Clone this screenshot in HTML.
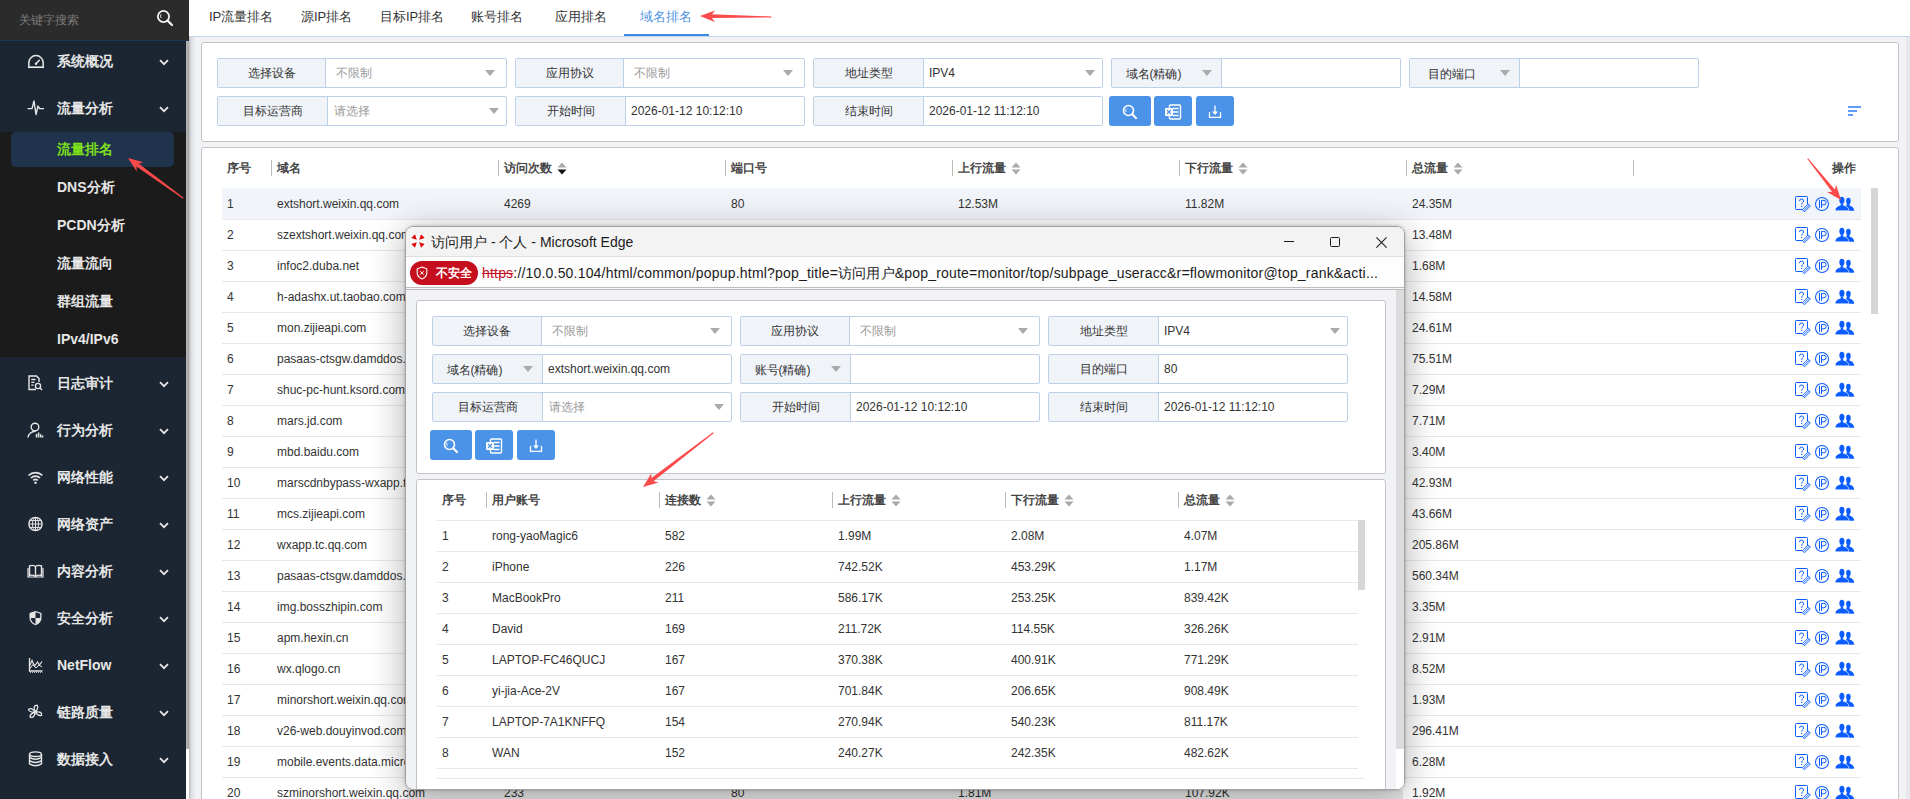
<!DOCTYPE html><html><head><meta charset="utf-8"><style>
*{box-sizing:border-box;margin:0;padding:0}
html,body{width:1910px;height:799px;overflow:hidden}
body{position:relative;background:#f0f2f5;font-family:"Liberation Sans", sans-serif;color:#333;font-size:12px}
.a{position:absolute;white-space:nowrap}
.side{position:absolute;left:0;top:0;width:186px;height:799px;background:#1c2633}
.mi{position:absolute;left:57px;font-size:14px;font-weight:bold;color:#e6e6e6;line-height:16px}
.si{position:absolute;left:57px;font-size:14px;font-weight:bold;color:#e6e6e6;line-height:16px}
.ic{position:absolute;left:27px}
.chev{position:absolute;left:159px}
.tab{position:absolute;top:9px;font-size:13px;color:#333;line-height:16px}
.card{position:absolute;background:#fff;border:1px solid #c4c4c4;border-radius:3px}
.fb{position:absolute;height:30px;border:1px solid #bcd0e8;border-radius:2px;background:#fff}
.fl{position:absolute;left:0;top:0;bottom:0;background:#f0f4f9;border-right:1px solid #bcd0e8;font-size:12px;color:#333;text-align:center;line-height:28px}
.fv{position:absolute;top:0;line-height:28px;font-size:12px;color:#333}
.ph{color:#999}
.tri{position:absolute;width:0;height:0;border-left:5.75px solid transparent;border-right:5.75px solid transparent;border-top:6px solid #aaa}
.btn{position:absolute;height:31px;background:#4b93e8;border-radius:3px}
.th{position:absolute;font-size:12px;font-weight:bold;color:#444;line-height:14px}
.dv{position:absolute;width:1px;height:16px;background:#bbb}
.td{position:absolute;font-size:12px;color:#333;line-height:14px}
.rl{position:absolute;height:1px;background:#e8e8e8}
.srt{position:absolute;width:10px;height:12px}
</style></head><body>

<div class="side">
<div class="a" style="left:0;top:0;width:189px;height:40px;background:#2b2b2b"></div>
<div class="a" style="left:0;top:40px;width:189px;height:1px;background:#1f3554"></div>
<div class="a" style="left:19px;top:12px;font-size:12px;color:#7a7a7a;line-height:16px">关键字搜索</div>
<svg class="a" style="left:156px;top:9px" width="18" height="18" viewBox="0 0 18 18"><circle cx="7.5" cy="7.5" r="5.6" fill="none" stroke="#f2f2f2" stroke-width="1.8"/><path d="M11.6 11.6 L16 16" stroke="#f2f2f2" stroke-width="2.2" stroke-linecap="round"/><path d="M5 5.5 A3 3 0 0 0 5.2 9" fill="none" stroke="#f2f2f2" stroke-width="1"/></svg>
<div class="a" style="left:0;top:132px;width:186px;height:225px;background:#1b1b1b"></div>
<div class="a" style="left:11px;top:132px;width:163px;height:35px;background:#20334d;border-radius:5px"></div>
</div>
<div class="a" style="left:186px;top:41px;width:3px;height:708px;background:linear-gradient(90deg,#b4b4b4,#a6a6a6)"></div>
<div class="a" style="left:186px;top:749px;width:3px;height:50px;background:#fff"></div>
<div class="a" style="left:189px;top:37px;width:7px;height:762px;background:linear-gradient(90deg,#b8b8b8,#dcdde0 30%,#f0f2f5)"></div>
<div class="ic" style="top:53px"><svg width="18" height="16" viewBox="0 0 18 16"><path d="M1.8 14 V9.8 A7.2 7.2 0 0 1 16.2 9.8 V14" fill="none" stroke="#e6e6e6" stroke-width="1.5"/><path d="M1 14.2 H17" stroke="#e6e6e6" stroke-width="1.7"/><path d="M9 10.8 L12.3 7.2" stroke="#e6e6e6" stroke-width="1.5" stroke-linecap="round"/><circle cx="9" cy="10.8" r="1.2" fill="#e6e6e6"/></svg></div>
<div class="mi" style="top:53px">系统概况</div>
<div class="chev" style="top:55px"><svg width="10" height="7" viewBox="0 0 10 7"><path d="M1 1.2 L5 5.2 L9 1.2" fill="none" stroke="#e6e6e6" stroke-width="1.8"/></svg></div>
<div class="ic" style="top:100px"><svg width="18" height="16" viewBox="0 0 18 16"><path d="M0.5 8.6 H5 L7 1 L9 14.5 L11 6 L12.6 8.6 H17" fill="none" stroke="#e6e6e6" stroke-width="1.4" stroke-linejoin="round"/></svg></div>
<div class="mi" style="top:100px">流量分析</div>
<div class="chev" style="top:102px"><svg width="10" height="7" viewBox="0 0 10 7"><path d="M1 1.2 L5 5.2 L9 1.2" fill="none" stroke="#e6e6e6" stroke-width="1.8"/></svg></div>
<div class="ic" style="top:375px"><svg width="18" height="16" viewBox="0 0 18 16"><path d="M9 14.5 H2 V1 H9.5 L12 3.6 V7" fill="none" stroke="#e6e6e6" stroke-width="1.4"/><path d="M4.3 4.5 H8.5 M4.3 7.3 H7.5 M4.3 10.2 H6.5" stroke="#e6e6e6" stroke-width="1.3"/><circle cx="11" cy="11" r="2.6" fill="none" stroke="#e6e6e6" stroke-width="1.4"/><path d="M13 13 L15 15" stroke="#e6e6e6" stroke-width="1.5"/></svg></div>
<div class="mi" style="top:375px">日志审计</div>
<div class="chev" style="top:377px"><svg width="10" height="7" viewBox="0 0 10 7"><path d="M1 1.2 L5 5.2 L9 1.2" fill="none" stroke="#e6e6e6" stroke-width="1.8"/></svg></div>
<div class="ic" style="top:422px"><svg width="18" height="16" viewBox="0 0 18 16"><circle cx="8" cy="5" r="3.8" fill="none" stroke="#e6e6e6" stroke-width="1.4"/><path d="M1 15.5 A7.5 7 0 0 1 8.5 9.3" fill="none" stroke="#e6e6e6" stroke-width="1.4"/><path d="M9.5 15.5 V12 M11.6 15.5 V10.5 M13.7 15.5 V12.3 M15.6 15.5 V13.5" stroke="#e6e6e6" stroke-width="1.5"/></svg></div>
<div class="mi" style="top:422px">行为分析</div>
<div class="chev" style="top:424px"><svg width="10" height="7" viewBox="0 0 10 7"><path d="M1 1.2 L5 5.2 L9 1.2" fill="none" stroke="#e6e6e6" stroke-width="1.8"/></svg></div>
<div class="ic" style="top:469px"><svg width="18" height="16" viewBox="0 0 18 16"><path d="M1.5 6.5 A10 10 0 0 1 15.5 6.5" fill="none" stroke="#e6e6e6" stroke-width="1.6"/><path d="M3.9 9 A6.6 6.6 0 0 1 13.1 9" fill="none" stroke="#e6e6e6" stroke-width="1.6"/><path d="M6.2 11.4 A3.3 3.3 0 0 1 10.8 11.4" fill="none" stroke="#e6e6e6" stroke-width="1.6"/><circle cx="8.5" cy="13.8" r="1.2" fill="#e6e6e6"/></svg></div>
<div class="mi" style="top:469px">网络性能</div>
<div class="chev" style="top:471px"><svg width="10" height="7" viewBox="0 0 10 7"><path d="M1 1.2 L5 5.2 L9 1.2" fill="none" stroke="#e6e6e6" stroke-width="1.8"/></svg></div>
<div class="ic" style="top:516px"><svg width="18" height="16" viewBox="0 0 18 16"><circle cx="8.5" cy="8" r="6.6" fill="none" stroke="#e6e6e6" stroke-width="1.4"/><ellipse cx="8.5" cy="8" rx="3" ry="6.6" fill="none" stroke="#e6e6e6" stroke-width="1"/><path d="M2 8 H15 M3 4.6 H14 M3 11.4 H14 M8.5 1.4 V14.6" stroke="#e6e6e6" stroke-width="1"/></svg></div>
<div class="mi" style="top:516px">网络资产</div>
<div class="chev" style="top:518px"><svg width="10" height="7" viewBox="0 0 10 7"><path d="M1 1.2 L5 5.2 L9 1.2" fill="none" stroke="#e6e6e6" stroke-width="1.8"/></svg></div>
<div class="ic" style="top:563px"><svg width="18" height="16" viewBox="0 0 18 16"><path d="M2.5 3 V12.5 Q5.5 11.5 8.5 13.5 Q11.5 11.5 14.5 12.5 V3 Q11.5 1.5 8.5 3.5 Q5.5 1.5 2.5 3 Z M8.5 3.5 V13.5" fill="none" stroke="#e6e6e6" stroke-width="1.4"/><path d="M1 5 V14 H16 V5" fill="none" stroke="#e6e6e6" stroke-width="1.2"/></svg></div>
<div class="mi" style="top:563px">内容分析</div>
<div class="chev" style="top:565px"><svg width="10" height="7" viewBox="0 0 10 7"><path d="M1 1.2 L5 5.2 L9 1.2" fill="none" stroke="#e6e6e6" stroke-width="1.8"/></svg></div>
<div class="ic" style="top:610px"><svg width="18" height="16" viewBox="0 0 18 16"><path d="M8.5 1 L14.5 3 V8 Q14.5 13 8.5 15.3 Q2.5 13 2.5 8 V3 Z" fill="#e6e6e6"/><path d="M8.5 2.3 V8 H13.2 V3.8 Z M8.5 8 V14 Q4 12 3.8 8 Z" fill="#1c2633"/></svg></div>
<div class="mi" style="top:610px">安全分析</div>
<div class="chev" style="top:612px"><svg width="10" height="7" viewBox="0 0 10 7"><path d="M1 1.2 L5 5.2 L9 1.2" fill="none" stroke="#e6e6e6" stroke-width="1.8"/></svg></div>
<div class="ic" style="top:657px"><svg width="18" height="16" viewBox="0 0 18 16"><path d="M2.5 1 V14 H15.5" fill="none" stroke="#e6e6e6" stroke-width="1.3"/><path d="M2.5 9 L5 3.5 L7.5 9 L10.5 5 L12.5 8 L15 4.5" fill="none" stroke="#e6e6e6" stroke-width="1.2"/><path d="M2.5 12 L6 7.5 L9 11 L12 8 L15 10" fill="none" stroke="#e6e6e6" stroke-width="1"/><path d="M3 15.5 H15.5" stroke="#e6e6e6" stroke-width="0.8" stroke-dasharray="1 1"/></svg></div>
<div class="mi" style="top:657px">NetFlow</div>
<div class="chev" style="top:659px"><svg width="10" height="7" viewBox="0 0 10 7"><path d="M1 1.2 L5 5.2 L9 1.2" fill="none" stroke="#e6e6e6" stroke-width="1.8"/></svg></div>
<div class="ic" style="top:704px"><svg width="18" height="16" viewBox="0 0 18 16"><g fill="none" stroke="#e6e6e6" stroke-width="1.3"><path d="M8.5 8 Q5 1.5 10 1.2 Q12 3.5 8.5 8Z"/><path d="M8.5 8 Q15.5 7 14.5 11.5 Q11 12.5 8.5 8Z"/><path d="M8.5 8 Q7 15 3 13 Q3 9.5 8.5 8Z"/><path d="M8.5 8 Q2 8.5 1.5 5.5 Q4.5 3 8.5 8Z"/></g></svg></div>
<div class="mi" style="top:704px">链路质量</div>
<div class="chev" style="top:706px"><svg width="10" height="7" viewBox="0 0 10 7"><path d="M1 1.2 L5 5.2 L9 1.2" fill="none" stroke="#e6e6e6" stroke-width="1.8"/></svg></div>
<div class="ic" style="top:751px"><svg width="18" height="16" viewBox="0 0 18 16"><g fill="none" stroke="#e6e6e6" stroke-width="1.4"><ellipse cx="8.5" cy="3.2" rx="6" ry="2.3"/><path d="M2.5 3.2 V12.8 Q8.5 16.6 14.5 12.8 V3.2"/><path d="M2.5 6.4 Q8.5 10.2 14.5 6.4 M2.5 9.6 Q8.5 13.4 14.5 9.6"/></g></svg></div>
<div class="mi" style="top:751px">数据接入</div>
<div class="chev" style="top:753px"><svg width="10" height="7" viewBox="0 0 10 7"><path d="M1 1.2 L5 5.2 L9 1.2" fill="none" stroke="#e6e6e6" stroke-width="1.8"/></svg></div>
<div class="si" style="top:141px;color:#7ddf1c">流量排名</div>
<div class="si" style="top:179px;color:#e6e6e6">DNS分析</div>
<div class="si" style="top:217px;color:#e6e6e6">PCDN分析</div>
<div class="si" style="top:255px;color:#e6e6e6">流量流向</div>
<div class="si" style="top:293px;color:#e6e6e6">群组流量</div>
<div class="si" style="top:331px;color:#e6e6e6">IPv4/IPv6</div>
<div class="a" style="left:189px;top:0;width:1721px;height:36px;background:#fff"></div>
<div class="a" style="left:189px;top:36px;width:1721px;height:1px;background:#c3d5ec"></div>
<div class="tab" style="left:209px;color:#333">IP流量排名</div>
<div class="tab" style="left:301px;color:#333">源IP排名</div>
<div class="tab" style="left:380px;color:#333">目标IP排名</div>
<div class="tab" style="left:471px;color:#333">账号排名</div>
<div class="tab" style="left:555px;color:#333">应用排名</div>
<div class="tab" style="left:640px;color:#4a90e2">域名排名</div>
<div class="a" style="left:624px;top:34px;width:85px;height:2px;background:#3d8ae6"></div>
<div class="card" style="left:201px;top:42px;width:1698px;height:100px"></div>
<div class="fb" style="left:217px;top:58px;width:290px"><div class="fl" style="width:108px">选择设备</div><div class="fv ph" style="left:118px">不限制</div><div class="tri" style="left:267px;top:11px"></div></div>
<div class="fb" style="left:515px;top:58px;width:290px"><div class="fl" style="width:108px">应用协议</div><div class="fv ph" style="left:118px">不限制</div><div class="tri" style="left:267px;top:11px"></div></div>
<div class="fb" style="left:813px;top:58px;width:290px"><div class="fl" style="width:110px">地址类型</div><div class="fv" style="left:115px">IPV4</div><div class="tri" style="left:271px;top:11px"></div></div>
<div class="fb" style="left:1111px;top:58px;width:290px"><div class="fl" style="width:110px;padding-right:26px;line-height:31px">域名(精确)</div><div class="tri" style="left:90px;top:11px"></div></div>
<div class="fb" style="left:1409px;top:58px;width:290px"><div class="fl" style="width:110px;padding-right:26px;line-height:31px">目的端口</div><div class="tri" style="left:90px;top:11px"></div></div>
<div class="fb" style="left:217px;top:96px;width:290px"><div class="fl" style="width:110px">目标运营商</div><div class="fv ph" style="left:116px">请选择</div><div class="tri" style="left:271px;top:11px"></div></div>
<div class="fb" style="left:515px;top:96px;width:290px"><div class="fl" style="width:110px">开始时间</div><div class="fv" style="left:115px">2026-01-12 10:12:10</div></div>
<div class="fb" style="left:813px;top:96px;width:290px"><div class="fl" style="width:110px">结束时间</div><div class="fv" style="left:115px">2026-01-12 11:12:10</div></div>
<div class="btn" style="left:1109px;top:96px;width:42px;height:30px;display:flex;align-items:center;justify-content:center;padding-top:2px"><svg width="16" height="16" viewBox="0 0 16 16"><circle cx="6.5" cy="6.5" r="5" fill="none" stroke="#fff" stroke-width="1.6"/><path d="M10.2 10.2 L14 14" stroke="#fff" stroke-width="2.2" stroke-linecap="round"/><path d="M4.2 4.5 A2.8 2.8 0 0 0 4.4 8" fill="none" stroke="#fff" stroke-width="0.9"/></svg></div>
<div class="btn" style="left:1154px;top:96px;width:38px;height:30px;display:flex;align-items:center;justify-content:center;padding-top:2px"><svg width="18" height="16" viewBox="0 0 18 16"><rect x="5.5" y="1" width="11" height="14" rx="1" fill="none" stroke="#fff" stroke-width="1.4"/><path d="M9 4.5 H14.5 M9 8 H14.5 M9 11.5 H14.5" stroke="#fff" stroke-width="1.4"/><rect x="1" y="4" width="8" height="8" rx="1" fill="#fff"/><path d="M3 6 L7 10 M7 6 L3 10" stroke="#4b93e8" stroke-width="1.1"/></svg></div>
<div class="btn" style="left:1196px;top:96px;width:38px;height:30px;display:flex;align-items:center;justify-content:center;padding-top:2px"><svg width="14" height="14" viewBox="0 0 14 14"><path d="M7 0.5 V8" fill="none" stroke="#fff" stroke-width="1.3"/><path d="M4 6.6 L7 10 L10 6.6 Z" fill="#fff"/><path d="M1.5 7 V12.3 H12.5 V7" fill="none" stroke="#fff" stroke-width="1.3"/></svg></div>
<svg class="a" style="left:1848px;top:106px" width="14" height="10" viewBox="0 0 14 10"><path d="M0 1 H13 M0 5 H9 M0 9 H5" stroke="#2f7cf6" stroke-width="1.6"/></svg>
<div class="card" style="left:201px;top:147px;width:1698px;height:700px"></div>
<div class="th" style="left:227px;top:161px">序号</div>
<div class="th" style="left:277px;top:161px">域名</div>
<div class="th" style="left:504px;top:161px">访问次数</div>
<svg class="a" style="left:557px;top:162px" width="10" height="13" viewBox="0 0 10 13"><path d="M0.5 5.5 L5 0.5 L9.5 5.5Z" fill="#aaa"/><path d="M0.5 7.5 L5 12.5 L9.5 7.5Z" fill="#111"/></svg>
<div class="th" style="left:731px;top:161px">端口号</div>
<div class="th" style="left:958px;top:161px">上行流量</div>
<svg class="a" style="left:1011px;top:162px" width="10" height="13" viewBox="0 0 10 13"><path d="M0.5 5.5 L5 0.5 L9.5 5.5Z" fill="#aaa"/><path d="M0.5 7.5 L5 12.5 L9.5 7.5Z" fill="#aaa"/></svg>
<div class="th" style="left:1185px;top:161px">下行流量</div>
<svg class="a" style="left:1238px;top:162px" width="10" height="13" viewBox="0 0 10 13"><path d="M0.5 5.5 L5 0.5 L9.5 5.5Z" fill="#aaa"/><path d="M0.5 7.5 L5 12.5 L9.5 7.5Z" fill="#aaa"/></svg>
<div class="th" style="left:1412px;top:161px">总流量</div>
<svg class="a" style="left:1453px;top:162px" width="10" height="13" viewBox="0 0 10 13"><path d="M0.5 5.5 L5 0.5 L9.5 5.5Z" fill="#aaa"/><path d="M0.5 7.5 L5 12.5 L9.5 7.5Z" fill="#aaa"/></svg>
<div class="dv" style="left:271px;top:160px"></div>
<div class="dv" style="left:498px;top:160px"></div>
<div class="dv" style="left:725px;top:160px"></div>
<div class="dv" style="left:952px;top:160px"></div>
<div class="dv" style="left:1179px;top:160px"></div>
<div class="dv" style="left:1406px;top:160px"></div>
<div class="dv" style="left:1633px;top:160px"></div>
<div class="th" style="left:1832px;top:161px">操作</div>
<div class="a" style="left:222px;top:188px;width:1639px;height:31px;background:#f1f4f8"></div>
<div class="td" style="left:227px;top:197px">1</div>
<div class="td" style="left:277px;top:197px">extshort.weixin.qq.com</div>
<div class="td" style="left:504px;top:197px">4269</div>
<div class="td" style="left:731px;top:197px">80</div>
<div class="td" style="left:958px;top:197px">12.53M</div>
<div class="td" style="left:1185px;top:197px">11.82M</div>
<div class="td" style="left:1412px;top:197px">24.35M</div>
<div class="a" style="left:1793px;top:195px;line-height:0"><svg width="64" height="18" viewBox="0 0 64 18"><g fill="none" stroke="#0b5cff" stroke-width="1.1">
<path d="M9.6 14.5 H3.3 Q2.5 14.5 2.5 13.7 V2.3 Q2.5 1.5 3.3 1.5 H13.7 Q14.5 1.5 14.5 2.3 V9.4" stroke-width="1"/>
<path d="M6.5 6.1 Q6.5 4.0 8.5 4.0 Q10.6 4.0 10.6 5.9 Q10.6 7.2 9.3 8.0 Q8.7 8.5 8.7 9.7" stroke-width="1"/>
<path d="M8.7 11.0 V12.0" stroke-width="1.1"/>
<path d="M9.4 14.7 L15.2 8.9 L17.3 11.0 L11.5 16.8 Z M10.5 15.8 L16.2 10.1" stroke-width="0.9"/>
<circle cx="29" cy="9" r="6.5" stroke-width="1.05"/>
<path d="M26.5 4.9 V12.9 M28.5 12.9 V5.4 H30.9 A2.2 2.2 0 0 1 30.9 9.8 H28.5" stroke-width="1"/>
</g><g fill="#0b5cff">
<ellipse cx="55.4" cy="5.9" rx="2.3" ry="3.2"/>
<path d="M54.2 8.5 H56.6 V10.8 Q60.9 11.6 61.2 15.8 H55 Q55 12.5 53 11 Z"/>
<path d="M47.4 8 H50.4 V10.3 Q55.6 11.3 56 15.8 H42 Q42.3 11.3 47.4 10.3 Z" stroke="#fff" stroke-width="0.6"/>
<ellipse cx="48.9" cy="5.2" rx="2.55" ry="3.5"/>
</g></svg></div>
<div class="rl" style="left:222px;top:219px;width:1639px"></div>
<div class="td" style="left:227px;top:228px">2</div>
<div class="td" style="left:277px;top:228px">szextshort.weixin.qq.com</div>
<div class="td" style="left:1412px;top:228px">13.48M</div>
<div class="a" style="left:1793px;top:226px;line-height:0"><svg width="64" height="18" viewBox="0 0 64 18"><g fill="none" stroke="#0b5cff" stroke-width="1.1">
<path d="M9.6 14.5 H3.3 Q2.5 14.5 2.5 13.7 V2.3 Q2.5 1.5 3.3 1.5 H13.7 Q14.5 1.5 14.5 2.3 V9.4" stroke-width="1"/>
<path d="M6.5 6.1 Q6.5 4.0 8.5 4.0 Q10.6 4.0 10.6 5.9 Q10.6 7.2 9.3 8.0 Q8.7 8.5 8.7 9.7" stroke-width="1"/>
<path d="M8.7 11.0 V12.0" stroke-width="1.1"/>
<path d="M9.4 14.7 L15.2 8.9 L17.3 11.0 L11.5 16.8 Z M10.5 15.8 L16.2 10.1" stroke-width="0.9"/>
<circle cx="29" cy="9" r="6.5" stroke-width="1.05"/>
<path d="M26.5 4.9 V12.9 M28.5 12.9 V5.4 H30.9 A2.2 2.2 0 0 1 30.9 9.8 H28.5" stroke-width="1"/>
</g><g fill="#0b5cff">
<ellipse cx="55.4" cy="5.9" rx="2.3" ry="3.2"/>
<path d="M54.2 8.5 H56.6 V10.8 Q60.9 11.6 61.2 15.8 H55 Q55 12.5 53 11 Z"/>
<path d="M47.4 8 H50.4 V10.3 Q55.6 11.3 56 15.8 H42 Q42.3 11.3 47.4 10.3 Z" stroke="#fff" stroke-width="0.6"/>
<ellipse cx="48.9" cy="5.2" rx="2.55" ry="3.5"/>
</g></svg></div>
<div class="rl" style="left:222px;top:250px;width:1639px"></div>
<div class="td" style="left:227px;top:259px">3</div>
<div class="td" style="left:277px;top:259px">infoc2.duba.net</div>
<div class="td" style="left:1412px;top:259px">1.68M</div>
<div class="a" style="left:1793px;top:257px;line-height:0"><svg width="64" height="18" viewBox="0 0 64 18"><g fill="none" stroke="#0b5cff" stroke-width="1.1">
<path d="M9.6 14.5 H3.3 Q2.5 14.5 2.5 13.7 V2.3 Q2.5 1.5 3.3 1.5 H13.7 Q14.5 1.5 14.5 2.3 V9.4" stroke-width="1"/>
<path d="M6.5 6.1 Q6.5 4.0 8.5 4.0 Q10.6 4.0 10.6 5.9 Q10.6 7.2 9.3 8.0 Q8.7 8.5 8.7 9.7" stroke-width="1"/>
<path d="M8.7 11.0 V12.0" stroke-width="1.1"/>
<path d="M9.4 14.7 L15.2 8.9 L17.3 11.0 L11.5 16.8 Z M10.5 15.8 L16.2 10.1" stroke-width="0.9"/>
<circle cx="29" cy="9" r="6.5" stroke-width="1.05"/>
<path d="M26.5 4.9 V12.9 M28.5 12.9 V5.4 H30.9 A2.2 2.2 0 0 1 30.9 9.8 H28.5" stroke-width="1"/>
</g><g fill="#0b5cff">
<ellipse cx="55.4" cy="5.9" rx="2.3" ry="3.2"/>
<path d="M54.2 8.5 H56.6 V10.8 Q60.9 11.6 61.2 15.8 H55 Q55 12.5 53 11 Z"/>
<path d="M47.4 8 H50.4 V10.3 Q55.6 11.3 56 15.8 H42 Q42.3 11.3 47.4 10.3 Z" stroke="#fff" stroke-width="0.6"/>
<ellipse cx="48.9" cy="5.2" rx="2.55" ry="3.5"/>
</g></svg></div>
<div class="rl" style="left:222px;top:281px;width:1639px"></div>
<div class="td" style="left:227px;top:290px">4</div>
<div class="td" style="left:277px;top:290px">h-adashx.ut.taobao.com</div>
<div class="td" style="left:1412px;top:290px">14.58M</div>
<div class="a" style="left:1793px;top:288px;line-height:0"><svg width="64" height="18" viewBox="0 0 64 18"><g fill="none" stroke="#0b5cff" stroke-width="1.1">
<path d="M9.6 14.5 H3.3 Q2.5 14.5 2.5 13.7 V2.3 Q2.5 1.5 3.3 1.5 H13.7 Q14.5 1.5 14.5 2.3 V9.4" stroke-width="1"/>
<path d="M6.5 6.1 Q6.5 4.0 8.5 4.0 Q10.6 4.0 10.6 5.9 Q10.6 7.2 9.3 8.0 Q8.7 8.5 8.7 9.7" stroke-width="1"/>
<path d="M8.7 11.0 V12.0" stroke-width="1.1"/>
<path d="M9.4 14.7 L15.2 8.9 L17.3 11.0 L11.5 16.8 Z M10.5 15.8 L16.2 10.1" stroke-width="0.9"/>
<circle cx="29" cy="9" r="6.5" stroke-width="1.05"/>
<path d="M26.5 4.9 V12.9 M28.5 12.9 V5.4 H30.9 A2.2 2.2 0 0 1 30.9 9.8 H28.5" stroke-width="1"/>
</g><g fill="#0b5cff">
<ellipse cx="55.4" cy="5.9" rx="2.3" ry="3.2"/>
<path d="M54.2 8.5 H56.6 V10.8 Q60.9 11.6 61.2 15.8 H55 Q55 12.5 53 11 Z"/>
<path d="M47.4 8 H50.4 V10.3 Q55.6 11.3 56 15.8 H42 Q42.3 11.3 47.4 10.3 Z" stroke="#fff" stroke-width="0.6"/>
<ellipse cx="48.9" cy="5.2" rx="2.55" ry="3.5"/>
</g></svg></div>
<div class="rl" style="left:222px;top:312px;width:1639px"></div>
<div class="td" style="left:227px;top:321px">5</div>
<div class="td" style="left:277px;top:321px">mon.zijieapi.com</div>
<div class="td" style="left:1412px;top:321px">24.61M</div>
<div class="a" style="left:1793px;top:319px;line-height:0"><svg width="64" height="18" viewBox="0 0 64 18"><g fill="none" stroke="#0b5cff" stroke-width="1.1">
<path d="M9.6 14.5 H3.3 Q2.5 14.5 2.5 13.7 V2.3 Q2.5 1.5 3.3 1.5 H13.7 Q14.5 1.5 14.5 2.3 V9.4" stroke-width="1"/>
<path d="M6.5 6.1 Q6.5 4.0 8.5 4.0 Q10.6 4.0 10.6 5.9 Q10.6 7.2 9.3 8.0 Q8.7 8.5 8.7 9.7" stroke-width="1"/>
<path d="M8.7 11.0 V12.0" stroke-width="1.1"/>
<path d="M9.4 14.7 L15.2 8.9 L17.3 11.0 L11.5 16.8 Z M10.5 15.8 L16.2 10.1" stroke-width="0.9"/>
<circle cx="29" cy="9" r="6.5" stroke-width="1.05"/>
<path d="M26.5 4.9 V12.9 M28.5 12.9 V5.4 H30.9 A2.2 2.2 0 0 1 30.9 9.8 H28.5" stroke-width="1"/>
</g><g fill="#0b5cff">
<ellipse cx="55.4" cy="5.9" rx="2.3" ry="3.2"/>
<path d="M54.2 8.5 H56.6 V10.8 Q60.9 11.6 61.2 15.8 H55 Q55 12.5 53 11 Z"/>
<path d="M47.4 8 H50.4 V10.3 Q55.6 11.3 56 15.8 H42 Q42.3 11.3 47.4 10.3 Z" stroke="#fff" stroke-width="0.6"/>
<ellipse cx="48.9" cy="5.2" rx="2.55" ry="3.5"/>
</g></svg></div>
<div class="rl" style="left:222px;top:343px;width:1639px"></div>
<div class="td" style="left:227px;top:352px">6</div>
<div class="td" style="left:277px;top:352px">pasaas-ctsgw.damddos.com</div>
<div class="td" style="left:1412px;top:352px">75.51M</div>
<div class="a" style="left:1793px;top:350px;line-height:0"><svg width="64" height="18" viewBox="0 0 64 18"><g fill="none" stroke="#0b5cff" stroke-width="1.1">
<path d="M9.6 14.5 H3.3 Q2.5 14.5 2.5 13.7 V2.3 Q2.5 1.5 3.3 1.5 H13.7 Q14.5 1.5 14.5 2.3 V9.4" stroke-width="1"/>
<path d="M6.5 6.1 Q6.5 4.0 8.5 4.0 Q10.6 4.0 10.6 5.9 Q10.6 7.2 9.3 8.0 Q8.7 8.5 8.7 9.7" stroke-width="1"/>
<path d="M8.7 11.0 V12.0" stroke-width="1.1"/>
<path d="M9.4 14.7 L15.2 8.9 L17.3 11.0 L11.5 16.8 Z M10.5 15.8 L16.2 10.1" stroke-width="0.9"/>
<circle cx="29" cy="9" r="6.5" stroke-width="1.05"/>
<path d="M26.5 4.9 V12.9 M28.5 12.9 V5.4 H30.9 A2.2 2.2 0 0 1 30.9 9.8 H28.5" stroke-width="1"/>
</g><g fill="#0b5cff">
<ellipse cx="55.4" cy="5.9" rx="2.3" ry="3.2"/>
<path d="M54.2 8.5 H56.6 V10.8 Q60.9 11.6 61.2 15.8 H55 Q55 12.5 53 11 Z"/>
<path d="M47.4 8 H50.4 V10.3 Q55.6 11.3 56 15.8 H42 Q42.3 11.3 47.4 10.3 Z" stroke="#fff" stroke-width="0.6"/>
<ellipse cx="48.9" cy="5.2" rx="2.55" ry="3.5"/>
</g></svg></div>
<div class="rl" style="left:222px;top:374px;width:1639px"></div>
<div class="td" style="left:227px;top:383px">7</div>
<div class="td" style="left:277px;top:383px">shuc-pc-hunt.ksord.com</div>
<div class="td" style="left:1412px;top:383px">7.29M</div>
<div class="a" style="left:1793px;top:381px;line-height:0"><svg width="64" height="18" viewBox="0 0 64 18"><g fill="none" stroke="#0b5cff" stroke-width="1.1">
<path d="M9.6 14.5 H3.3 Q2.5 14.5 2.5 13.7 V2.3 Q2.5 1.5 3.3 1.5 H13.7 Q14.5 1.5 14.5 2.3 V9.4" stroke-width="1"/>
<path d="M6.5 6.1 Q6.5 4.0 8.5 4.0 Q10.6 4.0 10.6 5.9 Q10.6 7.2 9.3 8.0 Q8.7 8.5 8.7 9.7" stroke-width="1"/>
<path d="M8.7 11.0 V12.0" stroke-width="1.1"/>
<path d="M9.4 14.7 L15.2 8.9 L17.3 11.0 L11.5 16.8 Z M10.5 15.8 L16.2 10.1" stroke-width="0.9"/>
<circle cx="29" cy="9" r="6.5" stroke-width="1.05"/>
<path d="M26.5 4.9 V12.9 M28.5 12.9 V5.4 H30.9 A2.2 2.2 0 0 1 30.9 9.8 H28.5" stroke-width="1"/>
</g><g fill="#0b5cff">
<ellipse cx="55.4" cy="5.9" rx="2.3" ry="3.2"/>
<path d="M54.2 8.5 H56.6 V10.8 Q60.9 11.6 61.2 15.8 H55 Q55 12.5 53 11 Z"/>
<path d="M47.4 8 H50.4 V10.3 Q55.6 11.3 56 15.8 H42 Q42.3 11.3 47.4 10.3 Z" stroke="#fff" stroke-width="0.6"/>
<ellipse cx="48.9" cy="5.2" rx="2.55" ry="3.5"/>
</g></svg></div>
<div class="rl" style="left:222px;top:405px;width:1639px"></div>
<div class="td" style="left:227px;top:414px">8</div>
<div class="td" style="left:277px;top:414px">mars.jd.com</div>
<div class="td" style="left:1412px;top:414px">7.71M</div>
<div class="a" style="left:1793px;top:412px;line-height:0"><svg width="64" height="18" viewBox="0 0 64 18"><g fill="none" stroke="#0b5cff" stroke-width="1.1">
<path d="M9.6 14.5 H3.3 Q2.5 14.5 2.5 13.7 V2.3 Q2.5 1.5 3.3 1.5 H13.7 Q14.5 1.5 14.5 2.3 V9.4" stroke-width="1"/>
<path d="M6.5 6.1 Q6.5 4.0 8.5 4.0 Q10.6 4.0 10.6 5.9 Q10.6 7.2 9.3 8.0 Q8.7 8.5 8.7 9.7" stroke-width="1"/>
<path d="M8.7 11.0 V12.0" stroke-width="1.1"/>
<path d="M9.4 14.7 L15.2 8.9 L17.3 11.0 L11.5 16.8 Z M10.5 15.8 L16.2 10.1" stroke-width="0.9"/>
<circle cx="29" cy="9" r="6.5" stroke-width="1.05"/>
<path d="M26.5 4.9 V12.9 M28.5 12.9 V5.4 H30.9 A2.2 2.2 0 0 1 30.9 9.8 H28.5" stroke-width="1"/>
</g><g fill="#0b5cff">
<ellipse cx="55.4" cy="5.9" rx="2.3" ry="3.2"/>
<path d="M54.2 8.5 H56.6 V10.8 Q60.9 11.6 61.2 15.8 H55 Q55 12.5 53 11 Z"/>
<path d="M47.4 8 H50.4 V10.3 Q55.6 11.3 56 15.8 H42 Q42.3 11.3 47.4 10.3 Z" stroke="#fff" stroke-width="0.6"/>
<ellipse cx="48.9" cy="5.2" rx="2.55" ry="3.5"/>
</g></svg></div>
<div class="rl" style="left:222px;top:436px;width:1639px"></div>
<div class="td" style="left:227px;top:445px">9</div>
<div class="td" style="left:277px;top:445px">mbd.baidu.com</div>
<div class="td" style="left:1412px;top:445px">3.40M</div>
<div class="a" style="left:1793px;top:443px;line-height:0"><svg width="64" height="18" viewBox="0 0 64 18"><g fill="none" stroke="#0b5cff" stroke-width="1.1">
<path d="M9.6 14.5 H3.3 Q2.5 14.5 2.5 13.7 V2.3 Q2.5 1.5 3.3 1.5 H13.7 Q14.5 1.5 14.5 2.3 V9.4" stroke-width="1"/>
<path d="M6.5 6.1 Q6.5 4.0 8.5 4.0 Q10.6 4.0 10.6 5.9 Q10.6 7.2 9.3 8.0 Q8.7 8.5 8.7 9.7" stroke-width="1"/>
<path d="M8.7 11.0 V12.0" stroke-width="1.1"/>
<path d="M9.4 14.7 L15.2 8.9 L17.3 11.0 L11.5 16.8 Z M10.5 15.8 L16.2 10.1" stroke-width="0.9"/>
<circle cx="29" cy="9" r="6.5" stroke-width="1.05"/>
<path d="M26.5 4.9 V12.9 M28.5 12.9 V5.4 H30.9 A2.2 2.2 0 0 1 30.9 9.8 H28.5" stroke-width="1"/>
</g><g fill="#0b5cff">
<ellipse cx="55.4" cy="5.9" rx="2.3" ry="3.2"/>
<path d="M54.2 8.5 H56.6 V10.8 Q60.9 11.6 61.2 15.8 H55 Q55 12.5 53 11 Z"/>
<path d="M47.4 8 H50.4 V10.3 Q55.6 11.3 56 15.8 H42 Q42.3 11.3 47.4 10.3 Z" stroke="#fff" stroke-width="0.6"/>
<ellipse cx="48.9" cy="5.2" rx="2.55" ry="3.5"/>
</g></svg></div>
<div class="rl" style="left:222px;top:467px;width:1639px"></div>
<div class="td" style="left:227px;top:476px">10</div>
<div class="td" style="left:277px;top:476px">marscdnbypass-wxapp.tc.qq.com</div>
<div class="td" style="left:1412px;top:476px">42.93M</div>
<div class="a" style="left:1793px;top:474px;line-height:0"><svg width="64" height="18" viewBox="0 0 64 18"><g fill="none" stroke="#0b5cff" stroke-width="1.1">
<path d="M9.6 14.5 H3.3 Q2.5 14.5 2.5 13.7 V2.3 Q2.5 1.5 3.3 1.5 H13.7 Q14.5 1.5 14.5 2.3 V9.4" stroke-width="1"/>
<path d="M6.5 6.1 Q6.5 4.0 8.5 4.0 Q10.6 4.0 10.6 5.9 Q10.6 7.2 9.3 8.0 Q8.7 8.5 8.7 9.7" stroke-width="1"/>
<path d="M8.7 11.0 V12.0" stroke-width="1.1"/>
<path d="M9.4 14.7 L15.2 8.9 L17.3 11.0 L11.5 16.8 Z M10.5 15.8 L16.2 10.1" stroke-width="0.9"/>
<circle cx="29" cy="9" r="6.5" stroke-width="1.05"/>
<path d="M26.5 4.9 V12.9 M28.5 12.9 V5.4 H30.9 A2.2 2.2 0 0 1 30.9 9.8 H28.5" stroke-width="1"/>
</g><g fill="#0b5cff">
<ellipse cx="55.4" cy="5.9" rx="2.3" ry="3.2"/>
<path d="M54.2 8.5 H56.6 V10.8 Q60.9 11.6 61.2 15.8 H55 Q55 12.5 53 11 Z"/>
<path d="M47.4 8 H50.4 V10.3 Q55.6 11.3 56 15.8 H42 Q42.3 11.3 47.4 10.3 Z" stroke="#fff" stroke-width="0.6"/>
<ellipse cx="48.9" cy="5.2" rx="2.55" ry="3.5"/>
</g></svg></div>
<div class="rl" style="left:222px;top:498px;width:1639px"></div>
<div class="td" style="left:227px;top:507px">11</div>
<div class="td" style="left:277px;top:507px">mcs.zijieapi.com</div>
<div class="td" style="left:1412px;top:507px">43.66M</div>
<div class="a" style="left:1793px;top:505px;line-height:0"><svg width="64" height="18" viewBox="0 0 64 18"><g fill="none" stroke="#0b5cff" stroke-width="1.1">
<path d="M9.6 14.5 H3.3 Q2.5 14.5 2.5 13.7 V2.3 Q2.5 1.5 3.3 1.5 H13.7 Q14.5 1.5 14.5 2.3 V9.4" stroke-width="1"/>
<path d="M6.5 6.1 Q6.5 4.0 8.5 4.0 Q10.6 4.0 10.6 5.9 Q10.6 7.2 9.3 8.0 Q8.7 8.5 8.7 9.7" stroke-width="1"/>
<path d="M8.7 11.0 V12.0" stroke-width="1.1"/>
<path d="M9.4 14.7 L15.2 8.9 L17.3 11.0 L11.5 16.8 Z M10.5 15.8 L16.2 10.1" stroke-width="0.9"/>
<circle cx="29" cy="9" r="6.5" stroke-width="1.05"/>
<path d="M26.5 4.9 V12.9 M28.5 12.9 V5.4 H30.9 A2.2 2.2 0 0 1 30.9 9.8 H28.5" stroke-width="1"/>
</g><g fill="#0b5cff">
<ellipse cx="55.4" cy="5.9" rx="2.3" ry="3.2"/>
<path d="M54.2 8.5 H56.6 V10.8 Q60.9 11.6 61.2 15.8 H55 Q55 12.5 53 11 Z"/>
<path d="M47.4 8 H50.4 V10.3 Q55.6 11.3 56 15.8 H42 Q42.3 11.3 47.4 10.3 Z" stroke="#fff" stroke-width="0.6"/>
<ellipse cx="48.9" cy="5.2" rx="2.55" ry="3.5"/>
</g></svg></div>
<div class="rl" style="left:222px;top:529px;width:1639px"></div>
<div class="td" style="left:227px;top:538px">12</div>
<div class="td" style="left:277px;top:538px">wxapp.tc.qq.com</div>
<div class="td" style="left:1412px;top:538px">205.86M</div>
<div class="a" style="left:1793px;top:536px;line-height:0"><svg width="64" height="18" viewBox="0 0 64 18"><g fill="none" stroke="#0b5cff" stroke-width="1.1">
<path d="M9.6 14.5 H3.3 Q2.5 14.5 2.5 13.7 V2.3 Q2.5 1.5 3.3 1.5 H13.7 Q14.5 1.5 14.5 2.3 V9.4" stroke-width="1"/>
<path d="M6.5 6.1 Q6.5 4.0 8.5 4.0 Q10.6 4.0 10.6 5.9 Q10.6 7.2 9.3 8.0 Q8.7 8.5 8.7 9.7" stroke-width="1"/>
<path d="M8.7 11.0 V12.0" stroke-width="1.1"/>
<path d="M9.4 14.7 L15.2 8.9 L17.3 11.0 L11.5 16.8 Z M10.5 15.8 L16.2 10.1" stroke-width="0.9"/>
<circle cx="29" cy="9" r="6.5" stroke-width="1.05"/>
<path d="M26.5 4.9 V12.9 M28.5 12.9 V5.4 H30.9 A2.2 2.2 0 0 1 30.9 9.8 H28.5" stroke-width="1"/>
</g><g fill="#0b5cff">
<ellipse cx="55.4" cy="5.9" rx="2.3" ry="3.2"/>
<path d="M54.2 8.5 H56.6 V10.8 Q60.9 11.6 61.2 15.8 H55 Q55 12.5 53 11 Z"/>
<path d="M47.4 8 H50.4 V10.3 Q55.6 11.3 56 15.8 H42 Q42.3 11.3 47.4 10.3 Z" stroke="#fff" stroke-width="0.6"/>
<ellipse cx="48.9" cy="5.2" rx="2.55" ry="3.5"/>
</g></svg></div>
<div class="rl" style="left:222px;top:560px;width:1639px"></div>
<div class="td" style="left:227px;top:569px">13</div>
<div class="td" style="left:277px;top:569px">pasaas-ctsgw.damddos.com</div>
<div class="td" style="left:1412px;top:569px">560.34M</div>
<div class="a" style="left:1793px;top:567px;line-height:0"><svg width="64" height="18" viewBox="0 0 64 18"><g fill="none" stroke="#0b5cff" stroke-width="1.1">
<path d="M9.6 14.5 H3.3 Q2.5 14.5 2.5 13.7 V2.3 Q2.5 1.5 3.3 1.5 H13.7 Q14.5 1.5 14.5 2.3 V9.4" stroke-width="1"/>
<path d="M6.5 6.1 Q6.5 4.0 8.5 4.0 Q10.6 4.0 10.6 5.9 Q10.6 7.2 9.3 8.0 Q8.7 8.5 8.7 9.7" stroke-width="1"/>
<path d="M8.7 11.0 V12.0" stroke-width="1.1"/>
<path d="M9.4 14.7 L15.2 8.9 L17.3 11.0 L11.5 16.8 Z M10.5 15.8 L16.2 10.1" stroke-width="0.9"/>
<circle cx="29" cy="9" r="6.5" stroke-width="1.05"/>
<path d="M26.5 4.9 V12.9 M28.5 12.9 V5.4 H30.9 A2.2 2.2 0 0 1 30.9 9.8 H28.5" stroke-width="1"/>
</g><g fill="#0b5cff">
<ellipse cx="55.4" cy="5.9" rx="2.3" ry="3.2"/>
<path d="M54.2 8.5 H56.6 V10.8 Q60.9 11.6 61.2 15.8 H55 Q55 12.5 53 11 Z"/>
<path d="M47.4 8 H50.4 V10.3 Q55.6 11.3 56 15.8 H42 Q42.3 11.3 47.4 10.3 Z" stroke="#fff" stroke-width="0.6"/>
<ellipse cx="48.9" cy="5.2" rx="2.55" ry="3.5"/>
</g></svg></div>
<div class="rl" style="left:222px;top:591px;width:1639px"></div>
<div class="td" style="left:227px;top:600px">14</div>
<div class="td" style="left:277px;top:600px">img.bosszhipin.com</div>
<div class="td" style="left:1412px;top:600px">3.35M</div>
<div class="a" style="left:1793px;top:598px;line-height:0"><svg width="64" height="18" viewBox="0 0 64 18"><g fill="none" stroke="#0b5cff" stroke-width="1.1">
<path d="M9.6 14.5 H3.3 Q2.5 14.5 2.5 13.7 V2.3 Q2.5 1.5 3.3 1.5 H13.7 Q14.5 1.5 14.5 2.3 V9.4" stroke-width="1"/>
<path d="M6.5 6.1 Q6.5 4.0 8.5 4.0 Q10.6 4.0 10.6 5.9 Q10.6 7.2 9.3 8.0 Q8.7 8.5 8.7 9.7" stroke-width="1"/>
<path d="M8.7 11.0 V12.0" stroke-width="1.1"/>
<path d="M9.4 14.7 L15.2 8.9 L17.3 11.0 L11.5 16.8 Z M10.5 15.8 L16.2 10.1" stroke-width="0.9"/>
<circle cx="29" cy="9" r="6.5" stroke-width="1.05"/>
<path d="M26.5 4.9 V12.9 M28.5 12.9 V5.4 H30.9 A2.2 2.2 0 0 1 30.9 9.8 H28.5" stroke-width="1"/>
</g><g fill="#0b5cff">
<ellipse cx="55.4" cy="5.9" rx="2.3" ry="3.2"/>
<path d="M54.2 8.5 H56.6 V10.8 Q60.9 11.6 61.2 15.8 H55 Q55 12.5 53 11 Z"/>
<path d="M47.4 8 H50.4 V10.3 Q55.6 11.3 56 15.8 H42 Q42.3 11.3 47.4 10.3 Z" stroke="#fff" stroke-width="0.6"/>
<ellipse cx="48.9" cy="5.2" rx="2.55" ry="3.5"/>
</g></svg></div>
<div class="rl" style="left:222px;top:622px;width:1639px"></div>
<div class="td" style="left:227px;top:631px">15</div>
<div class="td" style="left:277px;top:631px">apm.hexin.cn</div>
<div class="td" style="left:1412px;top:631px">2.91M</div>
<div class="a" style="left:1793px;top:629px;line-height:0"><svg width="64" height="18" viewBox="0 0 64 18"><g fill="none" stroke="#0b5cff" stroke-width="1.1">
<path d="M9.6 14.5 H3.3 Q2.5 14.5 2.5 13.7 V2.3 Q2.5 1.5 3.3 1.5 H13.7 Q14.5 1.5 14.5 2.3 V9.4" stroke-width="1"/>
<path d="M6.5 6.1 Q6.5 4.0 8.5 4.0 Q10.6 4.0 10.6 5.9 Q10.6 7.2 9.3 8.0 Q8.7 8.5 8.7 9.7" stroke-width="1"/>
<path d="M8.7 11.0 V12.0" stroke-width="1.1"/>
<path d="M9.4 14.7 L15.2 8.9 L17.3 11.0 L11.5 16.8 Z M10.5 15.8 L16.2 10.1" stroke-width="0.9"/>
<circle cx="29" cy="9" r="6.5" stroke-width="1.05"/>
<path d="M26.5 4.9 V12.9 M28.5 12.9 V5.4 H30.9 A2.2 2.2 0 0 1 30.9 9.8 H28.5" stroke-width="1"/>
</g><g fill="#0b5cff">
<ellipse cx="55.4" cy="5.9" rx="2.3" ry="3.2"/>
<path d="M54.2 8.5 H56.6 V10.8 Q60.9 11.6 61.2 15.8 H55 Q55 12.5 53 11 Z"/>
<path d="M47.4 8 H50.4 V10.3 Q55.6 11.3 56 15.8 H42 Q42.3 11.3 47.4 10.3 Z" stroke="#fff" stroke-width="0.6"/>
<ellipse cx="48.9" cy="5.2" rx="2.55" ry="3.5"/>
</g></svg></div>
<div class="rl" style="left:222px;top:653px;width:1639px"></div>
<div class="td" style="left:227px;top:662px">16</div>
<div class="td" style="left:277px;top:662px">wx.qlogo.cn</div>
<div class="td" style="left:1412px;top:662px">8.52M</div>
<div class="a" style="left:1793px;top:660px;line-height:0"><svg width="64" height="18" viewBox="0 0 64 18"><g fill="none" stroke="#0b5cff" stroke-width="1.1">
<path d="M9.6 14.5 H3.3 Q2.5 14.5 2.5 13.7 V2.3 Q2.5 1.5 3.3 1.5 H13.7 Q14.5 1.5 14.5 2.3 V9.4" stroke-width="1"/>
<path d="M6.5 6.1 Q6.5 4.0 8.5 4.0 Q10.6 4.0 10.6 5.9 Q10.6 7.2 9.3 8.0 Q8.7 8.5 8.7 9.7" stroke-width="1"/>
<path d="M8.7 11.0 V12.0" stroke-width="1.1"/>
<path d="M9.4 14.7 L15.2 8.9 L17.3 11.0 L11.5 16.8 Z M10.5 15.8 L16.2 10.1" stroke-width="0.9"/>
<circle cx="29" cy="9" r="6.5" stroke-width="1.05"/>
<path d="M26.5 4.9 V12.9 M28.5 12.9 V5.4 H30.9 A2.2 2.2 0 0 1 30.9 9.8 H28.5" stroke-width="1"/>
</g><g fill="#0b5cff">
<ellipse cx="55.4" cy="5.9" rx="2.3" ry="3.2"/>
<path d="M54.2 8.5 H56.6 V10.8 Q60.9 11.6 61.2 15.8 H55 Q55 12.5 53 11 Z"/>
<path d="M47.4 8 H50.4 V10.3 Q55.6 11.3 56 15.8 H42 Q42.3 11.3 47.4 10.3 Z" stroke="#fff" stroke-width="0.6"/>
<ellipse cx="48.9" cy="5.2" rx="2.55" ry="3.5"/>
</g></svg></div>
<div class="rl" style="left:222px;top:684px;width:1639px"></div>
<div class="td" style="left:227px;top:693px">17</div>
<div class="td" style="left:277px;top:693px">minorshort.weixin.qq.com</div>
<div class="td" style="left:1412px;top:693px">1.93M</div>
<div class="a" style="left:1793px;top:691px;line-height:0"><svg width="64" height="18" viewBox="0 0 64 18"><g fill="none" stroke="#0b5cff" stroke-width="1.1">
<path d="M9.6 14.5 H3.3 Q2.5 14.5 2.5 13.7 V2.3 Q2.5 1.5 3.3 1.5 H13.7 Q14.5 1.5 14.5 2.3 V9.4" stroke-width="1"/>
<path d="M6.5 6.1 Q6.5 4.0 8.5 4.0 Q10.6 4.0 10.6 5.9 Q10.6 7.2 9.3 8.0 Q8.7 8.5 8.7 9.7" stroke-width="1"/>
<path d="M8.7 11.0 V12.0" stroke-width="1.1"/>
<path d="M9.4 14.7 L15.2 8.9 L17.3 11.0 L11.5 16.8 Z M10.5 15.8 L16.2 10.1" stroke-width="0.9"/>
<circle cx="29" cy="9" r="6.5" stroke-width="1.05"/>
<path d="M26.5 4.9 V12.9 M28.5 12.9 V5.4 H30.9 A2.2 2.2 0 0 1 30.9 9.8 H28.5" stroke-width="1"/>
</g><g fill="#0b5cff">
<ellipse cx="55.4" cy="5.9" rx="2.3" ry="3.2"/>
<path d="M54.2 8.5 H56.6 V10.8 Q60.9 11.6 61.2 15.8 H55 Q55 12.5 53 11 Z"/>
<path d="M47.4 8 H50.4 V10.3 Q55.6 11.3 56 15.8 H42 Q42.3 11.3 47.4 10.3 Z" stroke="#fff" stroke-width="0.6"/>
<ellipse cx="48.9" cy="5.2" rx="2.55" ry="3.5"/>
</g></svg></div>
<div class="rl" style="left:222px;top:715px;width:1639px"></div>
<div class="td" style="left:227px;top:724px">18</div>
<div class="td" style="left:277px;top:724px">v26-web.douyinvod.com</div>
<div class="td" style="left:1412px;top:724px">296.41M</div>
<div class="a" style="left:1793px;top:722px;line-height:0"><svg width="64" height="18" viewBox="0 0 64 18"><g fill="none" stroke="#0b5cff" stroke-width="1.1">
<path d="M9.6 14.5 H3.3 Q2.5 14.5 2.5 13.7 V2.3 Q2.5 1.5 3.3 1.5 H13.7 Q14.5 1.5 14.5 2.3 V9.4" stroke-width="1"/>
<path d="M6.5 6.1 Q6.5 4.0 8.5 4.0 Q10.6 4.0 10.6 5.9 Q10.6 7.2 9.3 8.0 Q8.7 8.5 8.7 9.7" stroke-width="1"/>
<path d="M8.7 11.0 V12.0" stroke-width="1.1"/>
<path d="M9.4 14.7 L15.2 8.9 L17.3 11.0 L11.5 16.8 Z M10.5 15.8 L16.2 10.1" stroke-width="0.9"/>
<circle cx="29" cy="9" r="6.5" stroke-width="1.05"/>
<path d="M26.5 4.9 V12.9 M28.5 12.9 V5.4 H30.9 A2.2 2.2 0 0 1 30.9 9.8 H28.5" stroke-width="1"/>
</g><g fill="#0b5cff">
<ellipse cx="55.4" cy="5.9" rx="2.3" ry="3.2"/>
<path d="M54.2 8.5 H56.6 V10.8 Q60.9 11.6 61.2 15.8 H55 Q55 12.5 53 11 Z"/>
<path d="M47.4 8 H50.4 V10.3 Q55.6 11.3 56 15.8 H42 Q42.3 11.3 47.4 10.3 Z" stroke="#fff" stroke-width="0.6"/>
<ellipse cx="48.9" cy="5.2" rx="2.55" ry="3.5"/>
</g></svg></div>
<div class="rl" style="left:222px;top:746px;width:1639px"></div>
<div class="td" style="left:227px;top:755px">19</div>
<div class="td" style="left:277px;top:755px">mobile.events.data.microsoft.com</div>
<div class="td" style="left:1412px;top:755px">6.28M</div>
<div class="a" style="left:1793px;top:753px;line-height:0"><svg width="64" height="18" viewBox="0 0 64 18"><g fill="none" stroke="#0b5cff" stroke-width="1.1">
<path d="M9.6 14.5 H3.3 Q2.5 14.5 2.5 13.7 V2.3 Q2.5 1.5 3.3 1.5 H13.7 Q14.5 1.5 14.5 2.3 V9.4" stroke-width="1"/>
<path d="M6.5 6.1 Q6.5 4.0 8.5 4.0 Q10.6 4.0 10.6 5.9 Q10.6 7.2 9.3 8.0 Q8.7 8.5 8.7 9.7" stroke-width="1"/>
<path d="M8.7 11.0 V12.0" stroke-width="1.1"/>
<path d="M9.4 14.7 L15.2 8.9 L17.3 11.0 L11.5 16.8 Z M10.5 15.8 L16.2 10.1" stroke-width="0.9"/>
<circle cx="29" cy="9" r="6.5" stroke-width="1.05"/>
<path d="M26.5 4.9 V12.9 M28.5 12.9 V5.4 H30.9 A2.2 2.2 0 0 1 30.9 9.8 H28.5" stroke-width="1"/>
</g><g fill="#0b5cff">
<ellipse cx="55.4" cy="5.9" rx="2.3" ry="3.2"/>
<path d="M54.2 8.5 H56.6 V10.8 Q60.9 11.6 61.2 15.8 H55 Q55 12.5 53 11 Z"/>
<path d="M47.4 8 H50.4 V10.3 Q55.6 11.3 56 15.8 H42 Q42.3 11.3 47.4 10.3 Z" stroke="#fff" stroke-width="0.6"/>
<ellipse cx="48.9" cy="5.2" rx="2.55" ry="3.5"/>
</g></svg></div>
<div class="rl" style="left:222px;top:777px;width:1639px"></div>
<div class="td" style="left:227px;top:786px">20</div>
<div class="td" style="left:277px;top:786px">szminorshort.weixin.qq.com</div>
<div class="td" style="left:504px;top:786px">233</div>
<div class="td" style="left:731px;top:786px">80</div>
<div class="td" style="left:958px;top:786px">1.81M</div>
<div class="td" style="left:1185px;top:786px">107.92K</div>
<div class="td" style="left:1412px;top:786px">1.92M</div>
<div class="a" style="left:1793px;top:784px;line-height:0"><svg width="64" height="18" viewBox="0 0 64 18"><g fill="none" stroke="#0b5cff" stroke-width="1.1">
<path d="M9.6 14.5 H3.3 Q2.5 14.5 2.5 13.7 V2.3 Q2.5 1.5 3.3 1.5 H13.7 Q14.5 1.5 14.5 2.3 V9.4" stroke-width="1"/>
<path d="M6.5 6.1 Q6.5 4.0 8.5 4.0 Q10.6 4.0 10.6 5.9 Q10.6 7.2 9.3 8.0 Q8.7 8.5 8.7 9.7" stroke-width="1"/>
<path d="M8.7 11.0 V12.0" stroke-width="1.1"/>
<path d="M9.4 14.7 L15.2 8.9 L17.3 11.0 L11.5 16.8 Z M10.5 15.8 L16.2 10.1" stroke-width="0.9"/>
<circle cx="29" cy="9" r="6.5" stroke-width="1.05"/>
<path d="M26.5 4.9 V12.9 M28.5 12.9 V5.4 H30.9 A2.2 2.2 0 0 1 30.9 9.8 H28.5" stroke-width="1"/>
</g><g fill="#0b5cff">
<ellipse cx="55.4" cy="5.9" rx="2.3" ry="3.2"/>
<path d="M54.2 8.5 H56.6 V10.8 Q60.9 11.6 61.2 15.8 H55 Q55 12.5 53 11 Z"/>
<path d="M47.4 8 H50.4 V10.3 Q55.6 11.3 56 15.8 H42 Q42.3 11.3 47.4 10.3 Z" stroke="#fff" stroke-width="0.6"/>
<ellipse cx="48.9" cy="5.2" rx="2.55" ry="3.5"/>
</g></svg></div>
<div class="a" style="left:1871px;top:188px;width:7px;height:126px;background:#d6d6d6"></div>
<div class="a" style="left:1906px;top:37px;width:4px;height:762px;background:#e6e8eb"></div>
<div class="a" style="left:407px;top:790px;width:996px;height:9px;background:rgba(0,0,0,0.09)"></div>
<div class="a" style="left:405px;top:226px;width:1000px;height:564px;border-radius:8px;box-shadow:0 6px 36px rgba(0,0,0,0.32),0 0 3px rgba(0,0,0,0.25);"></div>
<div class="a" style="left:405px;top:226px;width:1000px;height:564px;border-radius:8px;overflow:hidden;border:1px solid #a2a2a2;background:#f0f2f5">
<div class="a" style="left:0;top:0;width:100%;height:30px;background:#f3f3f3;border-bottom:1px solid #dedede"></div>
<svg class="a" style="left:4px;top:6px" width="16" height="16" viewBox="0 0 16 16"><rect width="16" height="16" fill="#f7f9f9"/><path d="M6.87 6.87 L1.24 4.99 L4.99 1.24Z M9.13 6.87 L11.01 1.24 L14.76 4.99Z M9.13 9.13 L14.76 11.01 L11.01 14.76Z M6.87 9.13 L4.99 14.76 L1.24 11.01Z" fill="#e10a0a"/></svg>
<div class="a" style="left:25px;top:7px;font-size:14px;color:#1b1b1b;line-height:16px">访问用户 - 个人 - Microsoft Edge</div>
<div class="a" style="left:878px;top:14px;width:10px;height:1px;background:#1b1b1b"></div>
<div class="a" style="left:924px;top:10px;width:10px;height:10px;border:1.2px solid #1b1b1b;border-radius:1.5px"></div>
<svg class="a" style="left:970px;top:10px" width="11" height="11" viewBox="0 0 11 11"><path d="M0.4 0.4 L10.6 10.6 M10.6 0.4 L0.4 10.6" stroke="#1b1b1b" stroke-width="1.1"/></svg>
<div class="a" style="left:0;top:30px;width:100%;height:33px;background:#fdfdfd;border-bottom:3px solid #bdbdbd"></div>
<div class="a" style="left:0;top:61px;width:100%;height:1px;background:#f6f6f6"></div>
<div class="a" style="left:4px;top:34px;width:68px;height:24px;border-radius:12px;background:#c50f1f"></div>
<svg class="a" style="left:10px;top:39px" width="12" height="14" viewBox="0 0 12 14"><path d="M6 1 L10.8 2.8 V6.8 Q10.8 11 6 13 Q1.2 11 1.2 6.8 V2.8 Z" fill="none" stroke="#fff" stroke-width="1.1"/><path d="M4.3 5.2 L7.7 8.6 M7.7 5.2 L4.3 8.6" stroke="#fff" stroke-width="1"/></svg>
<div class="a" style="left:30px;top:38px;font-size:12px;font-weight:bold;color:#fff;line-height:16px">不安全</div>
<div class="a" style="left:76px;top:38px;font-size:14px;color:#1b1b1b;line-height:16px;letter-spacing:0.19px"><span style="color:#c50f1f;text-decoration:line-through">https</span>://10.0.50.104/html/common/popup.html?pop_title=访问用户&amp;pop_route=monitor/top/subpage_useracc&amp;r=flowmonitor@top_rank&amp;acti...</div>
<div class="a" style="left:990px;top:63px;width:8px;height:459px;background:#dcdcdc"></div>
<div class="a" style="left:990px;top:522px;width:8px;height:41px;background:#fff"></div>
</div>
<div class="a" style="left:406px;top:289px;width:990px;height:500px;overflow:hidden"><div class="a" style="left:-406px;top:-289px;width:1910px;height:799px">
<div class="card" style="left:416px;top:300px;width:970px;height:174px"></div>
<div class="fb" style="left:432px;top:316px;width:300px"><div class="fl" style="width:109px">选择设备</div><div class="fv ph" style="left:119px">不限制</div><div class="tri" style="left:277px;top:11px"></div></div>
<div class="fb" style="left:740px;top:316px;width:300px"><div class="fl" style="width:109px">应用协议</div><div class="fv ph" style="left:119px">不限制</div><div class="tri" style="left:277px;top:11px"></div></div>
<div class="fb" style="left:1048px;top:316px;width:300px"><div class="fl" style="width:110px">地址类型</div><div class="fv" style="left:115px">IPV4</div><div class="tri" style="left:281px;top:11px"></div></div>
<div class="fb" style="left:432px;top:354px;width:300px"><div class="fl" style="width:110px;padding-right:26px;line-height:31px">域名(精确)</div><div class="tri" style="left:90px;top:11px"></div><div class="fv" style="left:115px">extshort.weixin.qq.com</div></div>
<div class="fb" style="left:740px;top:354px;width:300px"><div class="fl" style="width:110px;padding-right:26px;line-height:31px">账号(精确)</div><div class="tri" style="left:90px;top:11px"></div></div>
<div class="fb" style="left:1048px;top:354px;width:300px"><div class="fl" style="width:110px">目的端口</div><div class="fv" style="left:115px">80</div></div>
<div class="fb" style="left:432px;top:392px;width:300px"><div class="fl" style="width:110px">目标运营商</div><div class="fv ph" style="left:116px">请选择</div><div class="tri" style="left:281px;top:11px"></div></div>
<div class="fb" style="left:740px;top:392px;width:300px"><div class="fl" style="width:110px">开始时间</div><div class="fv" style="left:115px">2026-01-12 10:12:10</div></div>
<div class="fb" style="left:1048px;top:392px;width:300px"><div class="fl" style="width:110px">结束时间</div><div class="fv" style="left:115px">2026-01-12 11:12:10</div></div>
<div class="btn" style="left:430px;top:430px;width:42px;height:30px;display:flex;align-items:center;justify-content:center;padding-top:2px"><svg width="16" height="16" viewBox="0 0 16 16"><circle cx="6.5" cy="6.5" r="5" fill="none" stroke="#fff" stroke-width="1.6"/><path d="M10.2 10.2 L14 14" stroke="#fff" stroke-width="2.2" stroke-linecap="round"/><path d="M4.2 4.5 A2.8 2.8 0 0 0 4.4 8" fill="none" stroke="#fff" stroke-width="0.9"/></svg></div>
<div class="btn" style="left:475px;top:430px;width:38px;height:30px;display:flex;align-items:center;justify-content:center;padding-top:2px"><svg width="18" height="16" viewBox="0 0 18 16"><rect x="5.5" y="1" width="11" height="14" rx="1" fill="none" stroke="#fff" stroke-width="1.4"/><path d="M9 4.5 H14.5 M9 8 H14.5 M9 11.5 H14.5" stroke="#fff" stroke-width="1.4"/><rect x="1" y="4" width="8" height="8" rx="1" fill="#fff"/><path d="M3 6 L7 10 M7 6 L3 10" stroke="#4b93e8" stroke-width="1.1"/></svg></div>
<div class="btn" style="left:517px;top:430px;width:38px;height:30px;display:flex;align-items:center;justify-content:center;padding-top:2px"><svg width="14" height="14" viewBox="0 0 14 14"><path d="M7 0.5 V8" fill="none" stroke="#fff" stroke-width="1.3"/><path d="M4 6.6 L7 10 L10 6.6 Z" fill="#fff"/><path d="M1.5 7 V12.3 H12.5 V7" fill="none" stroke="#fff" stroke-width="1.3"/></svg></div>
<div class="card" style="left:416px;top:479px;width:970px;height:330px"></div>
<div class="th" style="left:442px;top:493px">序号</div>
<div class="th" style="left:492px;top:493px">用户账号</div>
<div class="th" style="left:665px;top:493px">连接数</div>
<svg class="a" style="left:706px;top:494px" width="10" height="13" viewBox="0 0 10 13"><path d="M0.5 5.5 L5 0.5 L9.5 5.5Z" fill="#aaa"/><path d="M0.5 7.5 L5 12.5 L9.5 7.5Z" fill="#aaa"/></svg>
<div class="th" style="left:838px;top:493px">上行流量</div>
<svg class="a" style="left:891px;top:494px" width="10" height="13" viewBox="0 0 10 13"><path d="M0.5 5.5 L5 0.5 L9.5 5.5Z" fill="#aaa"/><path d="M0.5 7.5 L5 12.5 L9.5 7.5Z" fill="#aaa"/></svg>
<div class="th" style="left:1011px;top:493px">下行流量</div>
<svg class="a" style="left:1064px;top:494px" width="10" height="13" viewBox="0 0 10 13"><path d="M0.5 5.5 L5 0.5 L9.5 5.5Z" fill="#aaa"/><path d="M0.5 7.5 L5 12.5 L9.5 7.5Z" fill="#aaa"/></svg>
<div class="th" style="left:1184px;top:493px">总流量</div>
<svg class="a" style="left:1225px;top:494px" width="10" height="13" viewBox="0 0 10 13"><path d="M0.5 5.5 L5 0.5 L9.5 5.5Z" fill="#aaa"/><path d="M0.5 7.5 L5 12.5 L9.5 7.5Z" fill="#aaa"/></svg>
<div class="dv" style="left:486px;top:492px"></div>
<div class="dv" style="left:659px;top:492px"></div>
<div class="dv" style="left:832px;top:492px"></div>
<div class="dv" style="left:1005px;top:492px"></div>
<div class="dv" style="left:1178px;top:492px"></div>
<div class="rl" style="left:437px;top:520px;width:928px"></div>
<div class="rl" style="left:437px;top:551px;width:921px"></div>
<div class="td" style="left:442px;top:529px">1</div>
<div class="td" style="left:492px;top:529px">rong-yaoMagic6</div>
<div class="td" style="left:665px;top:529px">582</div>
<div class="td" style="left:838px;top:529px">1.99M</div>
<div class="td" style="left:1011px;top:529px">2.08M</div>
<div class="td" style="left:1184px;top:529px">4.07M</div>
<div class="rl" style="left:437px;top:582px;width:921px"></div>
<div class="td" style="left:442px;top:560px">2</div>
<div class="td" style="left:492px;top:560px">iPhone</div>
<div class="td" style="left:665px;top:560px">226</div>
<div class="td" style="left:838px;top:560px">742.52K</div>
<div class="td" style="left:1011px;top:560px">453.29K</div>
<div class="td" style="left:1184px;top:560px">1.17M</div>
<div class="rl" style="left:437px;top:613px;width:921px"></div>
<div class="td" style="left:442px;top:591px">3</div>
<div class="td" style="left:492px;top:591px">MacBookPro</div>
<div class="td" style="left:665px;top:591px">211</div>
<div class="td" style="left:838px;top:591px">586.17K</div>
<div class="td" style="left:1011px;top:591px">253.25K</div>
<div class="td" style="left:1184px;top:591px">839.42K</div>
<div class="rl" style="left:437px;top:644px;width:921px"></div>
<div class="td" style="left:442px;top:622px">4</div>
<div class="td" style="left:492px;top:622px">David</div>
<div class="td" style="left:665px;top:622px">169</div>
<div class="td" style="left:838px;top:622px">211.72K</div>
<div class="td" style="left:1011px;top:622px">114.55K</div>
<div class="td" style="left:1184px;top:622px">326.26K</div>
<div class="rl" style="left:437px;top:675px;width:921px"></div>
<div class="td" style="left:442px;top:653px">5</div>
<div class="td" style="left:492px;top:653px">LAPTOP-FC46QUCJ</div>
<div class="td" style="left:665px;top:653px">167</div>
<div class="td" style="left:838px;top:653px">370.38K</div>
<div class="td" style="left:1011px;top:653px">400.91K</div>
<div class="td" style="left:1184px;top:653px">771.29K</div>
<div class="rl" style="left:437px;top:706px;width:921px"></div>
<div class="td" style="left:442px;top:684px">6</div>
<div class="td" style="left:492px;top:684px">yi-jia-Ace-2V</div>
<div class="td" style="left:665px;top:684px">167</div>
<div class="td" style="left:838px;top:684px">701.84K</div>
<div class="td" style="left:1011px;top:684px">206.65K</div>
<div class="td" style="left:1184px;top:684px">908.49K</div>
<div class="rl" style="left:437px;top:737px;width:921px"></div>
<div class="td" style="left:442px;top:715px">7</div>
<div class="td" style="left:492px;top:715px">LAPTOP-7A1KNFFQ</div>
<div class="td" style="left:665px;top:715px">154</div>
<div class="td" style="left:838px;top:715px">270.94K</div>
<div class="td" style="left:1011px;top:715px">540.23K</div>
<div class="td" style="left:1184px;top:715px">811.17K</div>
<div class="rl" style="left:437px;top:768px;width:921px"></div>
<div class="td" style="left:442px;top:746px">8</div>
<div class="td" style="left:492px;top:746px">WAN</div>
<div class="td" style="left:665px;top:746px">152</div>
<div class="td" style="left:838px;top:746px">240.27K</div>
<div class="td" style="left:1011px;top:746px">242.35K</div>
<div class="td" style="left:1184px;top:746px">482.62K</div>
<div class="rl" style="left:437px;top:778px;width:928px"></div>
<div class="a" style="left:1358px;top:520px;width:7px;height:70px;background:#d6d6d6"></div>
</div></div>
<svg class="a" style="left:688px;top:4px" width="95" height="25"><circle cx="83.00" cy="13.00" r="0.55" fill="#fb4a4a"/><polygon points="83.01,12.45 22.53,10.25 22.47,14.05 82.99,13.55" fill="#fb4a4a"/><polygon points="12.00,12.00 27.08,6.46 22.50,12.15 26.92,17.96" fill="#fb4a4a"/></svg>
<svg class="a" style="left:116px;top:146px" width="79" height="64"><circle cx="67.00" cy="52.00" r="0.55" fill="#fb4a4a"/><polygon points="67.32,51.56 21.61,16.64 19.37,19.71 66.68,52.44" fill="#fb4a4a"/><polygon points="12.00,12.00 27.51,16.17 20.49,18.18 20.75,25.47" fill="#fb4a4a"/></svg>
<svg class="a" style="left:1796px;top:147px" width="57" height="65"><circle cx="12.00" cy="12.00" r="0.55" fill="#fb4a4a"/><polygon points="11.57,12.34 36.94,46.01 39.90,43.63 12.43,11.66" fill="#fb4a4a"/><polygon points="45.00,53.00 31.12,44.92 38.42,44.82 40.07,37.71" fill="#fb4a4a"/></svg>
<svg class="a" style="left:631px;top:421px" width="94" height="78"><circle cx="82.00" cy="12.00" r="0.55" fill="#fb4a4a"/><polygon points="81.66,11.56 19.15,58.08 21.47,61.09 82.34,12.44" fill="#fb4a4a"/><polygon points="12.00,66.00 20.36,52.29 20.31,59.59 27.39,61.39" fill="#fb4a4a"/></svg>
</body></html>
